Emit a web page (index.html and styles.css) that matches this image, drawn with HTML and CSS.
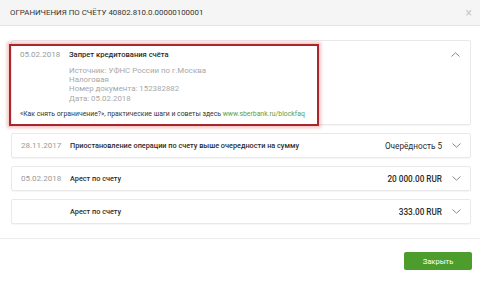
FILE: index.html
```html
<!DOCTYPE html>
<html>
<head>
  <title>Ограничения по счёту</title>
  <meta name="viewport" content="width=device-width, initial-scale=1.0">
  <link rel="stylesheet" href="styles.css">
</head>
<body>
  <div class="modal">
    <div class="modal-head">
      <span class="modal-title">Ограничения по счёту 40802.810.0.00000100001</span>
      <span class="close">&times;</span>
    </div>
    <div class="modal-body">
      <div class="card open">
        <div class="card-top">
          <span class="date">05.02.2018</span>
          <span class="name">Запрет кредитования счёта</span>
          <svg class="chev" width="9" height="5" viewBox="0 0 9 5"><path d="M0.5 4.5 L4.5 0.8 L8.5 4.5" fill="none" stroke="#8a8a8a" stroke-width="1"/></svg>
        </div>
        <div class="details">
          <div>Источник: УФНС России по г.Москва</div>
          <div>Налоговая</div>
          <div>Номер документа: 152382882</div>
          <div>Дата: 05.02.2018</div>
        </div>
        <div class="hint">«Как снять ограничение?», практические шаги и советы здесь <span class="link">www.sberbank.ru/blockfaq</span></div>
        <div class="mark"></div>
      </div>
      <div class="card row">
        <span class="date">28.11.2017</span>
        <span class="name">Приостановление операции по счету выше очередности на сумму</span>
        <span class="value light">Очерёдность 5</span>
        <svg class="chev" width="9" height="5" viewBox="0 0 9 5"><path d="M0.5 0.5 L4.5 4.2 L8.5 0.5" fill="none" stroke="#8a8a8a" stroke-width="1"/></svg>
      </div>
      <div class="card row">
        <span class="date">05.02.2018</span>
        <span class="name">Арест по счету</span>
        <span class="value">20 000.00 RUR</span>
        <svg class="chev" width="9" height="5" viewBox="0 0 9 5"><path d="M0.5 0.5 L4.5 4.2 L8.5 0.5" fill="none" stroke="#8a8a8a" stroke-width="1"/></svg>
      </div>
      <div class="card row">
        <span class="date"></span>
        <span class="name">Арест по счету</span>
        <span class="value">333.00 RUR</span>
        <svg class="chev" width="9" height="5" viewBox="0 0 9 5"><path d="M0.5 0.5 L4.5 4.2 L8.5 0.5" fill="none" stroke="#8a8a8a" stroke-width="1"/></svg>
      </div>
    </div>
    <div class="modal-foot">
      <button class="btn">Закрыть</button>
    </div>
  </div>
</body>
</html>
```

FILE: styles.css
```css
body {
  margin: 0;
  padding: 0;
  background-color: #ffffff;
  font-family: Roboto, "Liberation Sans", sans-serif;
  color: #333;
}
.modal {
  width: 480px;
  height: 282px;
  display: flex;
  flex-direction: column;
}
.modal-head {
  height: 26px;
  box-sizing: border-box;
  background-color: #f5f5f5;
  border-bottom: 1px solid #e4e4e4;
  display: flex;
  align-items: center;
  justify-content: space-between;
  padding: 0 8px 0 10px;
}
.modal-title {
  text-transform: uppercase;
  font-size: 7.9px;
  color: #333;
}
.close {
  color: #c8c8c8;
  font-size: 12px;
  line-height: 1;
}
.modal-body {
  display: flex;
  flex-direction: column;
  gap: 8px;
  padding: 14px 9px 14px 11px;
  border-bottom: 1px solid #ececec;
}
.card {
  border: 1px solid #e9e9e9;
  border-radius: 2px;
  box-shadow: 0 1px 1px rgba(0, 0, 0, 0.04);
  background-color: #fff;
}
.open {
  position: relative;
  height: 85px;
  box-sizing: border-box;
  padding: 7px 0 0 8px;
}
.card-top {
  display: flex;
  align-items: center;
  height: 12px;
  padding-right: 10px;
}
.date {
  width: 49px;
  flex-shrink: 0;
  font-size: 8px;
  color: #9a9a9a;
}
.name {
  flex: 1;
  font-size: 7.3px;
  font-weight: 500;
  color: #2b2b2b;
}
.open .name {
  font-size: 7.6px;
}
.details {
  margin: 6px 0 0 49px;
  font-size: 7.9px;
  line-height: 9.2px;
  color: #a8a8a8;
}
.hint {
  margin-top: 7px;
  font-size: 6.85px;
  color: #333;
}
.link {
  color: #5c9e3e;
}
.mark {
  position: absolute;
  left: -3px;
  top: 3px;
  width: 306px;
  height: 78px;
  border: 2px solid #a8262c;
  box-shadow: 0 0 3px 2px rgba(220, 90, 90, 0.35);
}
.row {
  height: 25px;
  box-sizing: border-box;
  display: flex;
  align-items: center;
  padding: 0 9px 0 9px;
}
.value {
  font-size: 8.2px;
  font-weight: 500;
  color: #2b2b2b;
  margin-right: 10px;
}
.value.light {
  font-weight: 400;
}
.chev {
  display: block;
  flex-shrink: 0;
}
.modal-foot {
  display: flex;
  justify-content: flex-end;
  padding: 13px 8px 0 0;
}
.btn {
  width: 68px;
  height: 18px;
  border: none;
  border-radius: 2px;
  background-color: #4c9d2c;
  color: #fff;
  font-family: Roboto, "Liberation Sans", sans-serif;
  font-size: 7.6px;
  padding: 0;
}
```
